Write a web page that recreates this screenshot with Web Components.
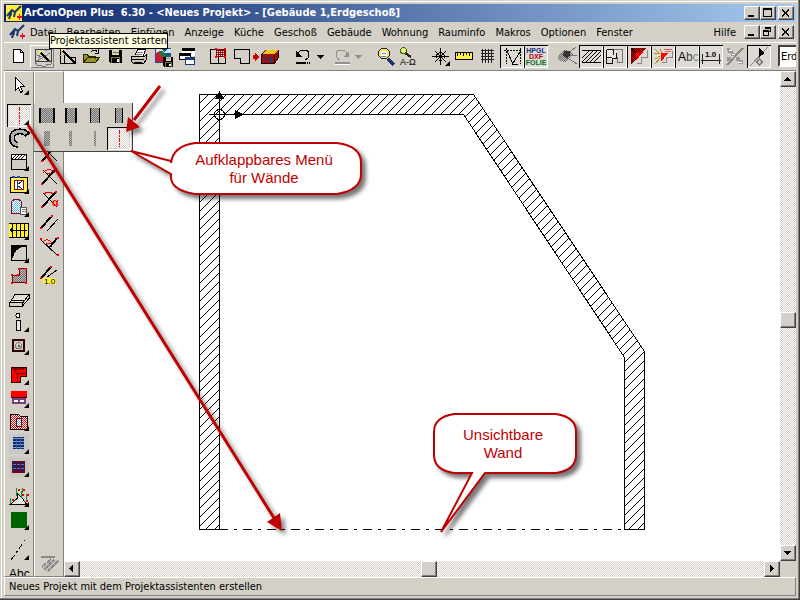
<!DOCTYPE html>
<html lang="de">
<head>
<meta charset="utf-8">
<title>ArConOpen Plus 6.30</title>
<style>
html, body { height: 100%; margin: 0; }
body { overflow: hidden; font: 11px/13px "DejaVu Sans Condensed", "DejaVu Sans", sans-serif; color: #000; --face: #d4d0c8; }
</style>
</head>
<body>
<app-window></app-window>
<script>
const define = (name, html, setup) => {
  const template = document.createElement('template');
  template.innerHTML = html;
  customElements.define(name, class extends HTMLElement {
    connectedCallback() {
      if (this.shadowRoot) return;
      this.attachShadow({ mode: 'open' }).append(template.content.cloneNode(true));
      if (setup) setup(this, this.shadowRoot);
    }
  });
};

const P = (d, stroke = '#000', fill = 'none', w = 1) => `<path d="${d}" stroke="${stroke}" fill="${fill}" stroke-width="${w}"/>`;
const F = (d, fill = '#000') => `<path d="${d}" fill="${fill}"/>`;
const dots = (list, c = '#f00') => list.map(([x, y]) => F(`M${x} ${y}h2v2h-2z`, c)).join('');
const DITHER = (id, a, b) => `<pattern id="${id}" width="2" height="2" patternUnits="userSpaceOnUse"><path d="M0 0h2v2h-2z" fill="${a}"/><path d="M0 0h1v1h-1zM1 1h1v1h-1z" fill="${b}"/></pattern>`;
const DEFS = '<defs>' + DITHER('g', '#b8b8b8', '#707070') + DITHER('l', '#fff', '#d8d4cc') + DITHER('r', '#f00', '#fff') + DITHER('d', '#d00000', '#400000') + DITHER('b', '#58b8e8', '#fff') + '</defs>';
const disk = F('M7 5h13v13h-12l-1-1z') + F('M10 5h7v5h-7z', '#d4d0c8') + P('M10.5 7.5h6', '#808000') + F('M9 12h9v6h-9z', '#807840') + F('M10 13h7v5h-7z') + F('M15 14h2v3h-2z', '#fff');
const cross = P('M5 18L19 3', '#000', 'none', 2) + P('M6 4l14 14') + dots([[4, 17], [18, 2]]);

const ICONS = {
  leer: '',
  logo: P('M1 11L6 5L9 7L15 1M6 5L3 14M9 7L8 12', '#16356f', 'none', 2) + P('M3 9l3 1', '#16356f') + F('M11 11h2v-2h1v2h2v2h-2v2h-1v-2h-2z', '#e01020'),
  neu: P('M7.5 4.5h7l3 3v10h-10z', '#000', '#fff') + P('M14.5 4.5v3h3'),
  assist: P('M5.5 4.5h16v12h-16z', '#404040') + P('M5 17l2 3h3l2 1h4l1-2h4l1-2M5 9l16 7M7 16l13-8', '#777') + P('M10 7l9 9', '#000', 'none', 2) + F('M9 6h2v2h-2z', '#ff0') + F('M15 5h2v1h-2zM8 12h2v1h-2z', '#d060d0'),
  cross: P('M6.5 3v15.5h15v-6h-8M10.5 10v8') + P('M8 5l14 14', '#000', 'none', 2) + F('M7 4h2v2h-2z', '#ff0') + P('M12 4h4M5 10h2', '#d080d0'),
  open: F('M5 9h6l1 2h7v2h-11l-3 5z', '#e8d860') + P('M5.5 17.5v-8h4l1 2h7v2M5.5 17.5l4-5h12l-4 5z', '#282800', '#9a942e') + P('M13 6.5q4-3 6 0M20.5 4v4h-4'),
  save: disk,
  print: P('M9 10l3-6h8l-3 7', '#000', '#fff') + P('M11 7.5h6M10 9.5h6', '#777') + P('M5.5 11.5h13l2-2v5l-3 4h-10l-2-2z', '#000', '#c8c4bc') + P('M6 14.5h12M8 17.5h8') + F('M14 12h2v1h-2z', '#ff0'),
  bild: F('M5 3h16v15h-16z', '#1c4f8c') + F('M6 4h5l3 3 3-3h4v4h-15z', '#c8e8f8') + F('M6 8l4-2 5 5v6h-9z', '#d01830') + F('M9 9l3-4 4 5-3 3z', '#178030') + `<g transform="translate(8 8) scale(.75)">${disk}</g>`,
  fenster: F('M8 3h13v8h-13z', '#fff') + F('M8 3h13v3h-13z') + F('M5 8h12v7h-12z') + F('M6 11h10v3h-10z', '#fff') + F('M11 12h10v8h-10z', '#193b78') + F('M12 15h8v4h-8z', '#fff'),
  auswahl: P('M5.5 4.5h15v14h-15zM13.5 12v6') + F('M11 4h10v8h-10z', '#fff') + F('M11 4h10v8h-10z', 'url(#d)') + P('M12 6h8M12 8h8M12 10h8', '#fff', 'none', 1).replace('/>', ' stroke-dasharray="1 1"/>') + dots([[10, 3], [19, 3], [10, 11], [19, 11]]),
  raum: P('M5.5 4.5h15v14h-9v-5h-6z'),
  haus: F('M0 10h2v-2l4 4-4 4v-2h-2z', '#d00000') + P('M8.5 9.5l4-4h13v7l-4 6h-13z', '#200', '#9b1010') + F('M9 9l4-4h12l-4 4z', '#e8c818') + F('M11 12h3v3h-3zM17 12h2v6h-2z', '#203878') + P('M21.5 10v8', '#200'),
  undo: P('M8 10v-1q1-4 5-4q6 0 6 4l-1 4-3 2') + F('M6 6v6h6z') + P('M6 17.5h10M17 17.5h1M19 17.5h1', '#000', 'none', 2),
  redo: P('M19 10v-1q-1-4-5-4q-6 0-6 4l1 4 3 2', '#909090') + F('M21 6v6h-6z', '#909090') + P('M7 19.5h15', '#fff') + P('M7 18h15', '#909090', 'none', 2),
  lupe: P('M15 14l6 6', '#1c3770', 'none', 3) + P('M5.5 8.5a5.5 5.5 0 1 0 11 0a5.5 5.5 0 1 0-11 0', '#222', '#ffe45a') + F('M8 6h6v5h-6z', '#fff') + P('M9 8.5h4M8 11h5', '#4c88c8'),
  suche: P('M8 8l6 4', '#222', 'none', 2) + P('M3.5 5.5a3 3 0 1 0 6 0a3 3 0 1 0-6 0', '#406020', '#e8f070') + '<text x="3" y="20" font-family="Liberation Sans" font-size="9">A-Ω</text>',
  kompass: P('M12.5 3v17M4 11.5h17M7 6l11 11M18 6l-11 11') + P('M8.5 11.5a4 4 0 1 0 8 0a4 4 0 1 0-8 0'),
  lineal: P('M3.5 7.5h17v7h-17z', '#000', '#fff04a') + P('M5.5 8v3M8.5 8v2M11.5 8v3M14.5 8v2M17.5 8v3'),
  raster: P('M6.5 4v14M9.5 4v14M12.5 4v14M15.5 4v14M5 5.5h13M5 8.5h13M5 11.5h13M5 14.5h13', '#222'),
  hilfslinie: '<g stroke-dasharray="2 1">' + P('M6.5 3v16M4 5.5h17M20.5 3v16') + '</g>' + P('M7 6l6 13M12 19h6M20 7l-7 11'),
  hpgl: '<g font-family="Liberation Sans" font-size="7" font-weight="bold" text-anchor="middle"><text x="12" y="8" fill="#103080">HPGL</text><text x="12" y="14" fill="#b00020">DXF</text><text x="12" y="20" fill="#007020">FOLIE</text></g>',
  zeiger: F('M4 9l5-4 6 1 3 3-4 5-4 3-4-1-3-2z', 'url(#g)') + P('M12 9l9-7M12 10h10M11 12l11 7', '#777') + F('M9 6h6v5l-3 2-4-2z', '#333'),
  schraff: P('M3 5.5h19M3 17.5h19M3 17L14 6M7 17L18 6M11 17L22 6M15 17l7-7M3 13l7-7'),
  grund: P('M4.5 4.5h15v13h-5v-5h-10z', '#777') + F('M4 5h10v9h-10z', 'url(#l)') + P('M3.5 4.5h7M3.5 5v13h6v-5h4v-5M3 12.5h6M10.5 4v6', '#111'),
  dach: P('M10 18.5h4v-6h6v-8', '#888') + F('M4 3h15l-4 5h-6v6l-5 5z', 'url(#d)') + F('M9 7h7l-7 9z', '#f00') + P('M4 3l5 5'),
  explo: P('M11 17.5h4v-5h6v-7', '#888') + F('M10 8h7l-7 9z', '#f00') + P('M4 4l5 5M3 8h6M4 14l5-3M4 19l5-6M9 4l2 4', '#b09018') + P('M13 4.5h8M14 6.5h6', '#d06060'),
  abc: '<text x="3" y="16" font-size="12" font-family="Liberation Sans">A<tspan fill="#444">b</tspan><tspan fill="#888">c</tspan></text>',
  mass: P('M3.5 9v10M20.5 9v10M2 15.5h20', '#222') + '<text x="6" y="12" font-size="8" font-family="Liberation Sans" font-weight="bold">1.0</text>',
  pflanze: P('M20 3L4 20', '#888', 'none', 2) + F('M4 3h3v2h3v3h2v3h-4v-3h-3zM13 12h4v3h3v4h-4v-3h-3zM4 12h4v4h-4z', '#999') + P('M6 5h3M15 17h4M9 9h3', '#fff'),
  nord: P('M21 2L3 21', '#888') + P('M12.5 3v8') + P('M12.5 11v4', '#888') + F('M12 3l6 5-6 4z') + P('M12.5 14l3 3-3 3-3-3z', '#777', '#d4d0c8'),
  cursor: P('M8.5 3.5v13l3-3 2 5 2-1-2-5h4z', '#000', '#fff'),
  wand: F('M2 2h20v19h-20z', 'url(#l)') + P('M12.5 3v17', '#f00').replace('/>', ' stroke-dasharray="4 1 2 1"/>'),
  bogen: P('M21 8Q18 4 12 4.5Q5 5 5 11Q5 17 11 18', '#000', 'none', 6) + P('M19 7Q17 4 12 4.5Q5 5 5 11Q5 17 11 18', '#b0b0b0', 'none', 3),
  decke: P('M4.5 4.5h15v15h-15z', '#000', '#d0ccc4') + F('M5 5h14v4h-14z', '#fff') + P('M5 9l4-4M8 9l4-4M11 9l4-4M14 9l4-4M4 9.5h16'),
  kfenster: P('M3.5 4.5h17v15h-17z', '#000', '#fff04a') + P('M5 4h3M10 4h3', '#1c50b0', 'none', 2) + P('M7.5 7.5h9v9h-9z', '#900020', '#fff') + P('M10 8v8M15 8l-5 4 5 4', '#203878'),
  tuer: P('M4.5 17.5v-11q0-2 3-3h4q3 1 3 3v11z', '#900020', 'url(#b)') + P('M13.5 11.5h6v7h-6z', '#555', '#fff') + P('M15 13.5h4M15 15.5h4', '#888'),
  treppe: F('M2 4h20v15h-20z', '#ffee38') + P('M2 4.5h20M2 18.5h20M5.5 4v15M9.5 4v15M13.5 4v15M17.5 4v15M21.5 4v15M3 11.5h17') + F('M2 11l4-3v6z'),
  ecke: P('M4.5 3.5h15v15h-15z') + F('M4 3h15v2h-4q-8 3-9 11h-2z'),
  poly: P('M5 17.5v-7h7v-7h7v14z', '#700', 'url(#g)') + dots([[4, 17], [4, 9], [10, 9], [11, 3], [18, 3], [18, 17]]),
  platte: P('M8 6.5h14l-6 8h-13z', '#000', '#e4e0d8') + P('M2.5 15v3h13l7-8v-3M5 12h12M15.5 15v3'),
  stuetze: P('M9 4.5a2 2 0 1 0 4 0a2 2 0 1 0-4 0', '#000', '#fff') + P('M9.5 9.5h4v10h-4z', '#000', 'url(#l)'),
  kamin: F('M5 5h13v13h-13z', '#300') + F('M7 7h9v9h-9z', '#ccc') + P('M8.5 11.5a3 3 0 1 0 6 0a3 3 0 1 0-6 0', '#777') + F('M11 11h2v2h-2z', '#555'),
  walm: F('M4 3h16v10h-6v6h-10z', '#300') + F('M5 4h14v8h-6v6h-8z', '#f00') + P('M4 3l6 6v9M10 9h10', '#600') + F('M5 4h14l-3 2h-10z', 'url(#d)'),
  gaube: F('M4 4h16v6h-16z', '#f00') + P('M4 10.5h16', '#200') + P('M6 12h12v4h-12zM12 12v4', '#78407c', '#fff', 2),
  gelaende: P('M3.5 4.5h8l2 2h7v13h-17z', '#000', 'url(#r)') + P('M9.5 8.5h5v8h-5z', '#700', 'url(#b)'),
  feld: F('M2 1h20v20h-20z', '#c8c8c4') + F('M6 4h11v12h-11z', '#102860') + P('M6 5.5h11M6 8.5h11M6 11.5h11M6 14.5h11', '#78a8ec') + P('M9.5 4v12M13.5 4v12', '#4060a0'),
  solar: F('M2 1h20v20h-20z', '#c8c8c4') + F('M5 5h13v12h-13z', '#800010') + F('M6 6h3v9h-3zM10 6h3v9h-3zM14 6h3v9h-3z', '#102860') + P('M6 8.5h3M10 8.5h3M14 8.5h3M6 12.5h3M10 12.5h3M14 12.5h3', '#5078c0'),
  berg: P('M3 18.5l7-6v-5l4 3 5 7v1z', '#000', 'url(#l)') + F('M9 2h1v8h-1zM14 5h1v7h-1zM19 8h1v7h-1zM15 2h1v5h-1zM3 12h1v6h-1z', '#093') + dots([[11, 3], [16, 3], [15, 8], [20, 8], [19, 14], [5, 13]]),
  gruen: F('M4 3h16v16h-16z', '#006400'),
  linie: P('M4 21L18 1', '#000', 'none', 1).replace('/>', ' stroke-dasharray="6 3 2 3"/>'),
  text: '<text x="2" y="16" font-size="12" font-family="Liberation Sans">Abc</text>',
  kreuz: cross,
  winkel: cross + P('M6 7q6-7 12 0M10 8q2-2 4 0', '#f00'),
  alpha: cross + P('M7 5q5-4 9 0', '#f00') + '<text x="15" y="17" font-size="11" font-weight="bold" fill="#f00" font-family="Liberation Sans">α</text>',
  parallel: P('M4 16L14 5', '#000', 'none', 2) + P('M10 19L21 7') + dots([[3, 15], [14, 3]]),
  lot: P('M13 12L20 3', '#000', 'none', 2) + P('M4 5l16 15') + P('M6 7q5-5 9 1M9 9q3-2 5 0', '#f00') + dots([[3, 3], [20, 2], [20, 19]]),
  abstand: P('M4 13L14 2', '#000', 'none', 2) + P('M10 12L20 5') + F('M6 13h13v6h-13z', '#fff030') + '<text x="7" y="19" font-size="8" font-family="Liberation Sans">1.0</text>' + dots([[3, 12], [13, 1]]),
  grau: P('M4 3.5h14M5 14l9-8M7 17l10-10M10 19l11-11', '#888', 'none', 2) + P('M6 16l9-9M8 19l11-11M6 12l5 7M9 9l5 7M12 6l6 6', '#bbb'),
  w1: F('M4 4h16v15h-16z', 'url(#g)') + F('M4 4h2v15h-2zM18 4h2v15h-2z'), w2: F('M6 4h12v15h-12z', 'url(#g)') + F('M6 4h2v15h-2zM16 4h2v15h-2z'),
  w3: F('M7 4h10v15h-10z', 'url(#g)') + F('M7 4h1v15h-1zM16 4h1v15h-1z'), w4: F('M8 4h8v15h-8z', 'url(#g)') + F('M8 4h1v15h-1zM15 4h1v15h-1z'),
  w5: F('M9 4h6v15h-6z', 'url(#g)'), w6: F('M10 4h3v15h-3z', 'url(#g)'), w7: F('M11 4h2v15h-2z', 'url(#g)')
};

define('tool-button', `<style>
:host { display: block; flex: none; }
:host([icon="leer"]) { visibility: hidden; }
button { display: block; position: relative; width: 24px; height: 23px; padding: 0; border: 0; background: transparent; color: inherit; overflow: hidden; }
:host([icon="pfeil"]) button { width: 14px; }
:host([icon="haus"]) button { width: 30px; }
svg { display: block; width: 28px; height: 23px; shape-rendering: crispEdges; }
button.up { box-shadow: inset 1px 1px #fff, inset -1px -1px #808080; }
button.down { background: #dedbd5; box-shadow: inset 1px 1px #000, inset -1px -1px #fff; }
.m { position: absolute; right: 2px; bottom: 2px; border: solid; border-width: 0 0 5px 5px; border-color: transparent transparent #000; }
</style><button type="button"></button>`, (el, root) => {
  const b = root.querySelector('button'), icon = el.getAttribute('icon');
  b.setAttribute('aria-label', el.getAttribute('label') || icon);
  if (el.hasAttribute('state')) b.className = el.getAttribute('state');
  const art = icon === 'pfeil' ? F('M3 10h7l-3.5 4z', el.getAttribute('color') || '#000') : ICONS[icon];
  b.innerHTML = `<svg viewBox="0 0 28 23">${DEFS}${art}</svg>` + (el.hasAttribute('more') ? '<span class="m"></span>' : '');
});

define('window-buttons', `<style>
:host { display: flex; flex: none; }
button { width: 16px; height: 14px; padding: 0; border: 1px solid; border-color: #fff #404040 #404040 #fff; background: var(--face); box-shadow: inset -1px -1px #808080; }
button:last-child { margin-left: 2px; }
svg { display: block; width: 12px; height: 12px; shape-rendering: crispEdges; }
</style><button aria-label="Minimieren"><svg>${F('M3 8h6v2h-6z')}</svg></button><button aria-label="Maximieren"><svg class="x"></svg></button><button aria-label="Schließen"><svg>${P('M3 2.5l7 7M10 2.5l-7 7', '#000', 'none', 2)}</svg></button>`, (el, root) => {
  root.querySelector('.x').innerHTML = el.hasAttribute('restore')
    ? P('M4.5 1.5h5v4h-2M2.5 5.5h5v4h-5z') + F('M4 1h6v2h-6zM2 4h6v2h-6z') : P('M2.5 2.5h8v7h-8z') + F('M2 1h9v2h-9z');
});

define('title-bar', `<style>
:host { display: flex; align-items: center; gap: 2px; height: 18px; padding: 0 2px; background: linear-gradient(90deg, #0a246a, #a6caf0); color: #fff; }
h1 { flex: 1; margin: 0; font: bold 11px/18px "DejaVu Sans Condensed", sans-serif; white-space: pre; overflow: hidden; }
svg { width: 16px; height: 16px; background: #ffee38; flex: none; }
</style><svg viewBox="0 0 16 16">${ICONS.logo}</svg><h1><slot></slot></h1><window-buttons></window-buttons>`);

define('menu-bar', `<style>
:host { display: flex; align-items: center; height: 20px; padding: 0 2px 0 5px; }
svg { width: 16px; height: 16px; flex: none; margin-right: 5px; }
nav { display: flex; flex: 1; gap: 10px; }
button { padding: 0; border: 0; background: none; font: inherit; color: inherit; }
.help { margin-left: auto; margin-right: 8px; }
</style><svg viewBox="0 0 16 16">${ICONS.logo}</svg><nav></nav><window-buttons restore></window-buttons>`, (el, root) => {
  root.querySelector('nav').innerHTML = el.getAttribute('items').split(',').map(t => `<button type="button"${t === 'Hilfe' ? ' class="help"' : ''}>${t}</button>`).join('');
});

const group = spec => '<div>' + spec.split(' ').map(s => {
  const [icon, ...flags] = s.split('.');
  return `<tool-button icon="${icon}"${flags.includes('m') ? ' more' : ''}${flags.includes('d') ? ' state="down"' : ''}${flags.includes('u') ? ' state="up"' : ''}${flags.includes('g') ? ' color="#909090"' : ''}></tool-button>`;
}).join('') + '</div>';

define('main-tools', `<style>
:host { display: flex; gap: 7px; height: 29px; box-sizing: border-box; padding: 2px 0 0 2px; border-top: 1px solid #fff; border-bottom: 1px solid #808080; overflow: hidden; }
div { display: flex; flex: none; }
select { flex: none; width: 120px; height: 22px; padding: 0 1px; border: 2px solid; border-color: #404040 #fff #fff #404040; background: #fff; appearance: none; font: inherit; color: #000; }
</style>${group('neu assist.u cross open save print bild fenster')}${group('auswahl raum haus')}${group('undo pfeil redo pfeil.g')}${group('lupe suche')}${group('kompass.m lineal raster hilfslinie.d hpgl.d')}${group('zeiger schraff.d grund.d dach.d explo.d abc.d mass.d pflanze nord.d')}<select aria-label="Geschoß"><option>Erdgeschoß</option></select>`);

define('side-tools', `<style>
:host { display: block; box-sizing: border-box; min-height: 0; overflow: hidden; border: 1px solid; border-color: #fff #808080 #808080 #fff; padding: 2px 2px 0; }
section { display: flex; flex-direction: column; gap: 7px; height: 100%; }
section > div { flex: none; }
section > .spacer { flex: 1; }
</style><section></section>`, (el, root) => {
  root.querySelector('section').innerHTML = el.getAttribute('groups').split('|').map(g => g === '-' ? '<div class="spacer"></div>' : group(g)).join('');
});

define('wall-flyout', `<style>
:host { position: absolute; left: 34px; top: 103px; display: grid; grid-template-columns: repeat(4, 24px); padding: 1px; background: var(--face); border-right: 1px solid #404040; border-bottom: 1px solid #404040; }
</style>${['w1', 'w2', 'w3', 'w4', 'w5', 'w6', 'w7'].map(n => `<tool-button icon="${n}" label="Wand"></tool-button>`).join('')}<tool-button icon="wand" state="down"></tool-button>`);

define('scroll-bar', `<style>
:host { display: flex; background: repeating-conic-gradient(#fff 0 25%, #d4d0c8 0 50%) 0 0 / 2px 2px; min-width: 0; min-height: 0; }
:host([vertical]) { flex-direction: column; }
button, i { flex: none; width: 16px; height: 16px; box-sizing: border-box; padding: 0; border: 1px solid; border-color: #fff #404040 #404040 #fff; background: var(--face); box-shadow: inset -1px -1px #808080; }
.before { flex: 51; } .after { flex: 49; } svg { display: block; width: 14px; height: 14px; shape-rendering: crispEdges; }
</style><button class="a" aria-label="Zurück"></button><span class="before"></span><i></i><span class="after"></span><button class="b" aria-label="Weiter"></button>`, (el, root) => {
  const v = el.hasAttribute('vertical');
  root.querySelector('.a').innerHTML = `<svg>${F(v ? 'M3 9h7l-3.5-4z' : 'M8 3v7l-4-3.5z')}</svg>`;
  root.querySelector('.b').innerHTML = `<svg>${F(v ? 'M3 5h7l-3.5 4z' : 'M5 3v7l4-3.5z')}</svg>`;
});

let hatch = '';
for (let c = 294; c < 1200; c += 9) hatch += `M${c - 90} 90L${c - 540} 540`;
define('plan-canvas', `<style>
:host { display: block; background: #fff; overflow: hidden; min-width: 0; min-height: 0; }
svg { display: block; width: 100%; height: 100%; shape-rendering: crispEdges; }
</style><svg><defs><clipPath id="wall"><path d="M199 94H474L644 351V529H624V357L463 114H219V529H199z"/></clipPath></defs>
<g transform="translate(-64 -71)" fill="none" stroke="#000"><path clip-path="url(#wall)" d="${hatch}"/>
<path d="M199.5 94.5H473.5L644.5 351.5V529.5H624.5V357.5L463.5 114.5H219.5V529.5H199.5z"/>
<path d="M219 529.5H624" stroke-dasharray="9 6 3 6"/><path d="M219.5 94V114M209 114.5H240"/><circle cx="219.5" cy="114.5" r="5"/>
<path d="M215 99L219.5 91L224 99zM235 110v9l9-4.5z" fill="#000" stroke="none"/></g></svg>`);

define('callout-note', `<style>
:host { position: absolute; display: flex; align-items: center; justify-content: center; box-sizing: border-box; padding-right: 4px; text-align: center; font: 15px/18px "Liberation Sans", sans-serif; color: #c00000; white-space: pre-line; }
svg { position: absolute; left: 0; top: 0; overflow: visible; filter: drop-shadow(4px 4px 2px #0008); }
p { position: relative; margin: 0; }
</style><svg width="1" height="1"><path fill="#fff" stroke="#c00000" stroke-width="2"/></svg><p><slot></slot></p>`, (el, root) => root.querySelector('path').setAttribute('d', el.getAttribute('shape')));

define('arrow-layer', `<style>
:host { position: absolute; inset: 0; pointer-events: none; }
svg { display: block; width: 100%; height: 100%; filter: drop-shadow(4px 4px 2px #0007); }
</style><svg><g stroke="#c00000" stroke-width="3"><path d="M28 125L274 518M160 86L134 120"/></g><path fill="#c00000" d="M282 531L267 522L280 513zM126 132L128 117L140 127z"/></svg>`);

define('tool-tip', `<style>
:host { position: absolute; left: 49px; top: 33px; padding: 0 0 1px; border: 1px solid #000; background: #ffffe1; white-space: nowrap; }
</style><slot></slot>`);

define('status-bar', `<style>
:host { display: block; height: 19px; box-sizing: border-box; padding: 2px 4px; border: 1px solid; border-color: #fff #808080 #808080 #fff; }
</style><slot></slot>`);

define('app-window', `<style>
:host { position: relative; display: flex; flex-direction: column; height: 100%; box-sizing: border-box; padding: 4px; box-shadow: inset -1px -1px #404040, inset -2px -2px #808080, inset 1px 1px #d4d0c8, inset 2px 2px #fff; background: var(--face); overflow: hidden; }
.body { flex: 1; min-height: 0; display: grid; grid-template: minmax(0, 1fr) 16px / 30px 30px minmax(0, 1fr) 16px; }
side-tools { grid-row: 1 / 3; }
.v { grid-area: 1 / 4; } .h { grid-area: 2 / 3; }
</style>
<title-bar>ArConOpen Plus  6.30 - &lt;Neues Projekt&gt; - [Gebäude 1,Erdgeschoß]</title-bar>
<menu-bar items="Datei,Bearbeiten,Einfügen,Anzeige,Küche,Geschoß,Gebäude,Wohnung,Rauminfo,Makros,Optionen,Fenster,Hilfe"></menu-bar>
<main-tools></main-tools>
<div class="body">
<side-tools groups="cursor.m|wand.m.d bogen decke.m kfenster.m tuer.m treppe.m ecke.m poly platte stuetze.m kamin.m|walm.m gaube.m gelaende.m feld.m solar.m|berg.m gruen.m|linie.m text"></side-tools>
<side-tools groups="leer leer leer kreuz winkel alpha parallel lot|abstand|-|grau"></side-tools>
<plan-canvas></plan-canvas><scroll-bar class="v" vertical></scroll-bar><scroll-bar class="h"></scroll-bar>
</div>
<status-bar>Neues Projekt mit dem Projektassistenten erstellen</status-bar>
<wall-flyout></wall-flyout>
<callout-note style="left:171px;top:143px;width:190px;height:51px" shape="M24 0H166Q190 3 190 20V31Q190 47 166 51H24Q0 47 0 34V31L-40 8L0 18V20Q2 3 24 0z">Aufklappbares Menü
für Wände</callout-note>
<callout-note style="left:434px;top:414px;width:142px;height:59px" shape="M20 0H122Q142 3 142 18V41Q142 56 122 59H51L7 118L38 59H20Q0 56 0 41V18Q0 3 20 0z">Unsichtbare
Wand</callout-note>
<arrow-layer></arrow-layer>
<tool-tip>Projektassistent starten</tool-tip>`);
</script>
</body>
</html>
